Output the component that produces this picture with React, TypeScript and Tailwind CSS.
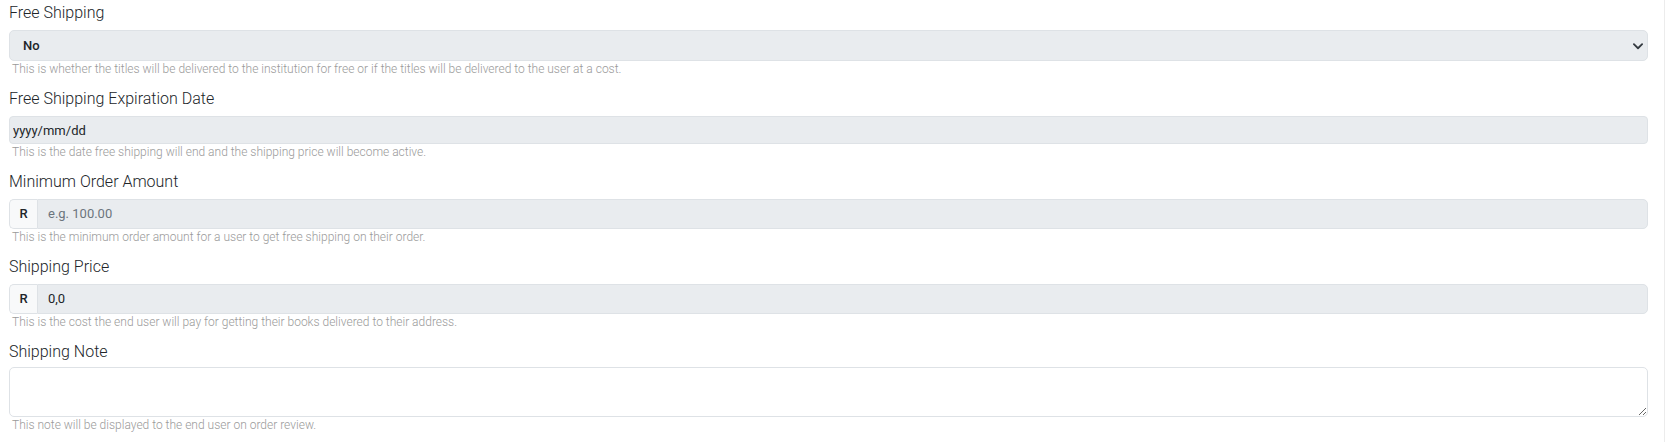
import React from 'react';

const labelCls = "block text-[16px] leading-[24px] font-light text-[#212529] mb-[5px]";
const helpCls = "mt-[1px] text-[12px] leading-[15px] font-light text-[#9a9a9a] pl-[3px]";

function Field({ label, help, gap, children }: { label: string; help: string; gap?: string; children: React.ReactNode }) {
  return (
    <div className="mb-[10px]">
      <label className={gap ?? labelCls}>{label}</label>
      {children}
      <div className={helpCls}>{help}</div>
    </div>
  );
}

function MoneyInput({ value, placeholder }: { value?: string; placeholder?: string }) {
  return (
    <div className="flex h-[30px] w-full">
      <span className="flex w-[28px] items-center justify-center rounded-l-[5px] border border-r-0 border-[#dee2e6] bg-[#f8f9fa] text-[13px] font-medium text-[#212529]">
        R
      </span>
      <input
        readOnly
        defaultValue={value}
        placeholder={placeholder}
        className="flex-1 rounded-r-[5px] border border-[#dee2e6] bg-[#e9ecef] pl-[10px] text-[13px] text-[#212529] outline-none placeholder:text-[#6c757d]"
      />
    </div>
  );
}

export default function App() {
  return (
    <div className="flex h-[442px] w-full bg-white font-['Roboto',sans-serif]">
      <div className="flex-1 pl-[9px] pr-[16px] pt-[1px]">
        <Field
          label="Free Shipping"
          help="This is whether the titles will be delivered to the institution for free or if the titles will be delivered to the user at a cost."
        >
          <div className="relative">
            <select
              disabled
              defaultValue="no"
              className="h-[31px] w-full appearance-none rounded-[5px] border border-[#dee2e6] bg-[#e9ecef] pl-[13px] text-[13px] font-medium text-[#212529] opacity-100 outline-none"
            >
              <option value="no">No</option>
              <option value="yes">Yes</option>
            </select>
            <svg
              className="pointer-events-none absolute right-[4px] top-1/2 -translate-y-1/2"
              width="12"
              height="12"
              viewBox="0 0 16 16"
            >
              <path d="M2.5 5.5l5.5 5.5 5.5-5.5" fill="none" stroke="#343a40" strokeWidth="2.4" strokeLinecap="round" strokeLinejoin="round" />
            </svg>
          </div>
        </Field>

        <Field
          label="Free Shipping Expiration Date"
          help="This is the date free shipping will end and the shipping price will become active."
        >
          <input
            readOnly
            defaultValue="yyyy/mm/dd"
            className="h-[28px] w-full rounded-[4px] border border-[#dee2e6] bg-[#e9ecef] pl-[3px] text-[13px] text-[#212529] outline-none"
          />
        </Field>

        <Field
          label="Minimum Order Amount"
          help="This is the minimum order amount for a user to get free shipping on their order."
        >
          <MoneyInput placeholder="e.g. 100.00" />
        </Field>

        <Field
          label="Shipping Price"
          help="This is the cost the end user will pay for getting their books delivered to their address."
        >
          <MoneyInput value="0,0" />
        </Field>

        <Field
          label="Shipping Note"
          help="This note will be displayed to the end user on order review."
          gap="block text-[16px] leading-[24px] font-light text-[#212529] mb-[3px]"
        >
          <textarea className="block h-[50px] w-full rounded-[5px] border border-[#dee2e6] bg-white text-[13px] outline-none" />
        </Field>
      </div>
      <div className="w-px bg-[#ececec]" />
    </div>
  );
}
